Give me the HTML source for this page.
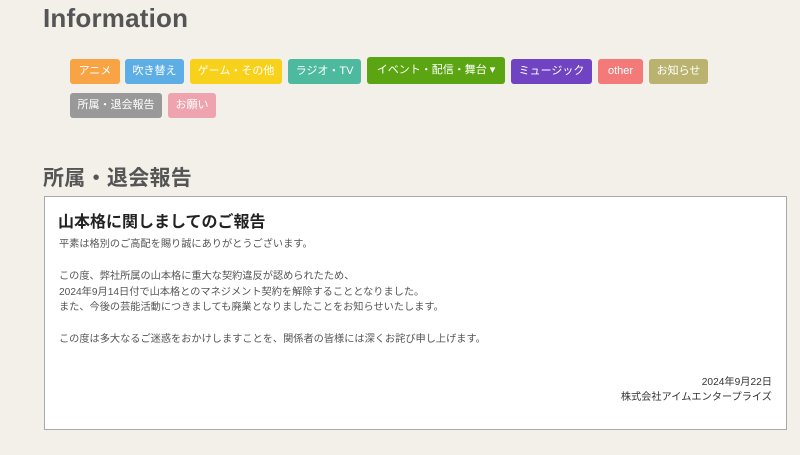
<!DOCTYPE html>
<html><head><meta charset="utf-8"><style>
*{margin:0;padding:0;box-sizing:border-box}
body{width:800px;height:455px;background:#f2f0e8;font-family:"Liberation Sans","Noto Sans CJK JP",sans-serif;position:relative;overflow:hidden;color:#555}
h1{position:absolute;left:43px;top:3px;font-size:26px;font-weight:bold;color:#555;letter-spacing:0.2px}
.b{position:absolute;height:25px;line-height:25px;font-size:11px;color:#fff;text-align:center;border-radius:3px;white-space:nowrap}
h2{position:absolute;left:43px;top:162px;font-size:21px;font-weight:bold;color:#555;letter-spacing:0.3px}
.box{position:absolute;left:44px;top:196px;width:743px;height:234px;background:#fff;border:1px solid #a8a8a8}
.t{position:absolute;left:13px;top:11px;font-size:16px;font-weight:bold;color:#222}
.p{position:absolute;left:14px;font-size:10.2px;color:#555;white-space:nowrap}
.r{position:absolute;right:14px;font-size:10.2px;color:#333;text-align:right;white-space:nowrap}
</style></head><body>
<h1>Information</h1>
<div class="b" style="left:70px;top:59px;width:50px;background:#f9a444">アニメ</div>
<div class="b" style="left:125px;top:59px;width:59px;background:#5eaee6">吹き替え</div>
<div class="b" style="left:190px;top:59px;width:92px;background:#f8d11a">ゲーム・その他</div>
<div class="b" style="left:288px;top:59px;width:73px;background:#4dba9f">ラジオ・TV</div>
<div class="b" style="left:367px;top:57px;width:138px;height:27px;line-height:27px;background:#5aa511">イベント・配信・舞台 ▾</div>
<div class="b" style="left:511px;top:59px;width:81px;background:#7043c2">ミュージック</div>
<div class="b" style="left:598px;top:59px;width:45px;background:#f47a7a">other</div>
<div class="b" style="left:649px;top:59px;width:59px;background:#b9b36f">お知らせ</div>
<div class="b" style="left:70px;top:93px;width:92px;background:#999">所属・退会報告</div>
<div class="b" style="left:168px;top:93px;width:48px;background:#eea3ae">お願い</div>
<h2>所属・退会報告</h2>
<div class="box">
<div class="t">山本格に関しましてのご報告</div>
<div class="p" style="top:38px">平素は格別のご高配を賜り誠にありがとうございます。</div>
<div class="p" style="top:70px">この度、弊社所属の山本格に重大な契約違反が認められたため、</div>
<div class="p" style="top:86px">2024年9月14日付で山本格とのマネジメント契約を解除することとなりました。</div>
<div class="p" style="top:101px">また、今後の芸能活動につきましても廃業となりましたことをお知らせいたします。</div>
<div class="p" style="top:133px">この度は多大なるご迷惑をおかけしますことを、関係者の皆様には深くお詫び申し上げます。</div>
<div class="r" style="top:176px">2024年9月22日</div>
<div class="r" style="top:191px">株式会社アイムエンタープライズ</div>
</div>
</body></html>
